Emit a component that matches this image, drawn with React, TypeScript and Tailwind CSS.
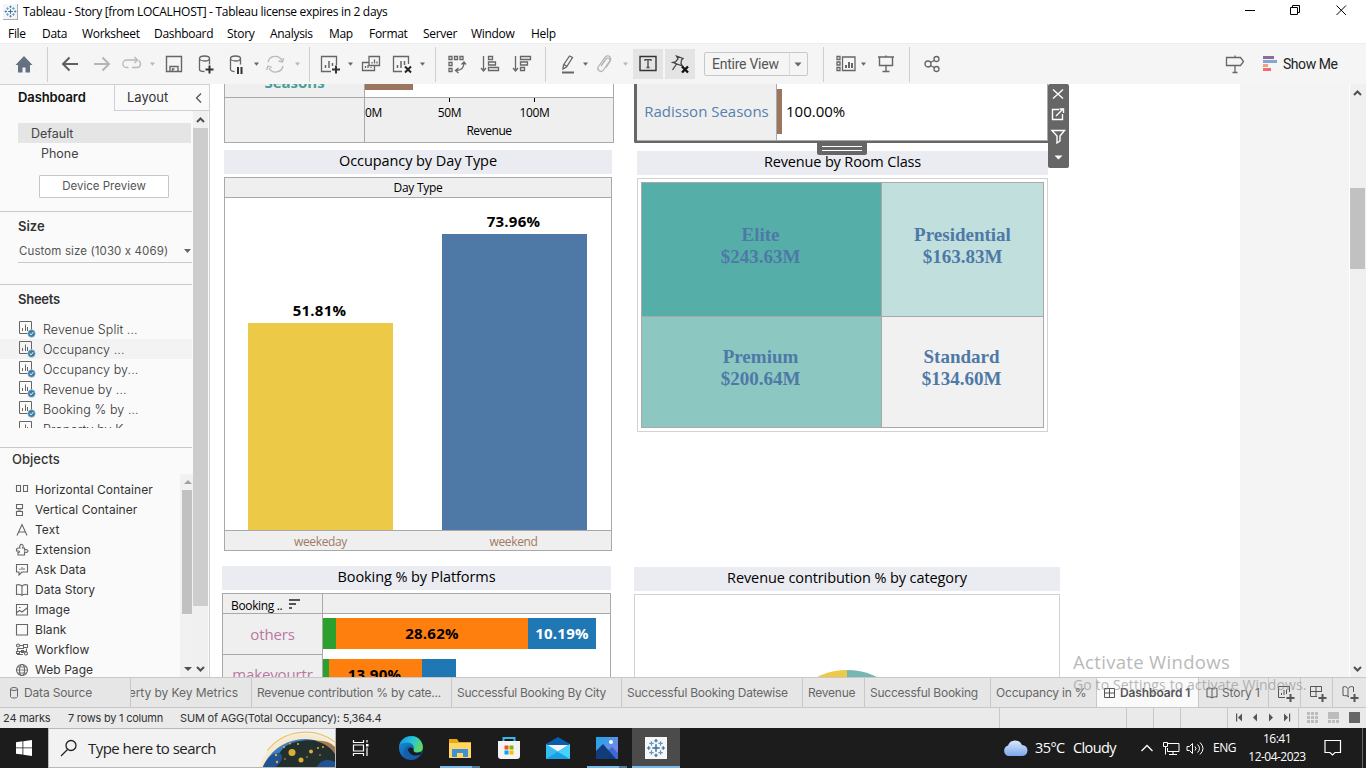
import React from "react";

const Svg = ({ w = 22, h = 22, children, className = "" }: { w?: number; h?: number; children: React.ReactNode; className?: string }) => (
  <svg width={w} height={h} viewBox={`0 0 ${w} ${h}`} fill="none" stroke="#666" strokeWidth="1.3" className={`shrink-0 ${className}`}>
    {children}
  </svg>
);

const Caret = ({ className = "", light = false }: { className?: string; light?: boolean }) => (
  <svg width="8" height="22" viewBox="0 0 8 22" className={`shrink-0 ${className}`}>
    <path d="M2 9.500h5L4.500 12.800z" fill={light ? "#b8b8b8" : "#666"} />
  </svg>
);

const Sep = ({ className = "" }: { className?: string }) => <div className={`h-[35px] w-px shrink-0 bg-[#cfcfcf] ${className}`} />;

const TableauMark = ({ size, className = "" }: { size: number; className?: string }) => (
  <svg width={size} height={size} viewBox="0 0 22 22" className={`shrink-0 ${className}`}>
    <g stroke="#2f6f9f" strokeWidth="1.3">
      <path d="M11 7v8M7 11h8" strokeWidth="1.6" />
      <path d="M11 1v4M9 3h4M11 17v4M9 19h4M3 9v4M1 11h4M19 9v4M17 11h4" />
      <path d="M6 3.500v5M3.500 6h5M16 3.500v5M13.500 6h5M6 13.500v5M3.500 16h5M16 13.500v5M13.500 16h5" stroke="#6a97b8" />
    </g>
  </svg>
);

const Plus = () => <path d="M17 12.500v8M13 16.500h8" stroke="#333" strokeWidth="2" />;

const menu: [string, string][] = [
  ["File", "w-[34px]"], ["Data", "w-[40px]"], ["Worksheet", "w-[72px]"], ["Dashboard", "w-[73px]"], ["Story", "w-[43px]"],
  ["Analysis", "w-[59px]"], ["Map", "w-[40px]"], ["Format", "w-[54px]"], ["Server", "w-[48px]"], ["Window", "w-[60px]"], ["Help", "w-[40px]"],
];

const TopBars = () => (
  <header className="shrink-0 bg-white text-[12px] text-black">
    <div className="flex h-[24px] items-center pl-[3px]">
      <div className="flex h-[16px] w-[15px] items-center justify-center border-r border-b border-[#aaa] bg-[#f3f6f8]">
        <TableauMark size={13} />
      </div>
      <span className="ml-[5px] whitespace-nowrap tracking-[-0.31px]">Tableau - Story [from LOCALHOST] - Tableau license expires in 2 days</span>
      <div className="ml-auto flex h-full items-start pt-[4px] pr-[19px]">
        <svg width="102" height="12" viewBox="0 0 102 12" fill="none" stroke="#000">
          <path d="M0 6.500h10M45.500 3.500h7v7h-7zM47.500 3.500v-2h7v7h-2M91.500 1.500l9.500 9.500M101 1.500l-9.500 9.500" />
        </svg>
      </div>
    </div>
    <nav className="flex h-[19px] items-center pl-[8px]">
      {menu.map(([m, w]) => (
        <span key={m} className={`${w} shrink-0 whitespace-nowrap tracking-[-0.3px]`}>{m}</span>
      ))}
    </nav>
  </header>
);

const Toolbar = () => (
  <div className="flex h-[41px] shrink-0 items-center border-t border-[#ececec] bg-[#f5f5f5]">
    <Svg className="ml-[13px]"><path d="M11 3 2.500 12H5v7.500h4.500v-5h3v5H17V12h2.500z" fill="#657181" stroke="none" /></Svg>
    <Sep className="ml-[12px]" />
    <Svg className="ml-[11px]"><path d="M19 11H4M10.500 4.500 4 11l6.500 6.500" strokeWidth="2" stroke="#5f5f5f" /></Svg>
    <Svg className="ml-[10px]"><path d="M3 11h15M11.500 4.500 18 11l-6.500 6.500" strokeWidth="2" stroke="#b5b5b5" /></Svg>
    <Svg className="ml-[8px]"><path d="M7.500 14.500H5.500a3.500 3.500 0 0 1 0-7.500H15.500M13.500 4l3 3-3 3M17.500 7.500c3.500 2 2 7-1.500 7H11" stroke="#b8b8b8" /></Svg>
    <Caret className="ml-[5px]" light />
    <Svg className="ml-[7px]"><path d="M3.500 3.500h15v15h-15zM7 18.500v-5h8v5M9.500 18.500v-2.500h2" strokeWidth="1.400" /></Svg>
    <Svg className="ml-[10px]"><ellipse cx="9.500" cy="5.500" rx="5" ry="2.500" /><path d="M4.500 5.500v11c0 1 2 2 5 2M14.500 5.500v6" /><path d="M14.500 12.500v8M10.500 16.500h8" stroke="#333" strokeWidth="2" /></Svg>
    <Svg className="ml-[9px]"><ellipse cx="9.500" cy="5.500" rx="5" ry="2.500" /><path d="M4.500 5.500v11c0 1 2 2 4 2M14.500 5.500v6" /><path d="M12 14v7M15.500 14v7" strokeWidth="2" stroke="#333" /></Svg>
    <Caret className="ml-[4px]" />
    <Svg className="ml-[4px]"><path d="M4 9a7.500 7.500 0 0 1 14-1.500M19 13a7.500 7.500 0 0 1-14 2M19.500 5l-1 4-4-1M2.500 17l1.500-4 4 1.500" stroke="#b8b8b8" /></Svg>
    <Caret className="ml-[7px]" light />
    <Sep className="ml-[8px]" />
    <Svg className="ml-[9px]"><path d="M12 18.500H2.500v-15h15V12" /><path d="M6.500 15v-3M10 15V8M13.500 13v-3" strokeWidth="1.500" /><Plus /></Svg>
    <Caret className="ml-[5px]" />
    <Svg className="ml-[6px]"><path d="M9 7.500V3.500h10.500v9h-10.500v-5M14.500 12.500v5h-12v-8H9" /><path d="M12 10.500V9M14.500 10.500v-4M17 10.500v-2M5.500 15v-2M8 15v-3M11 15v-1" /></Svg>
    <Svg className="ml-[9px]"><path d="M11 18.500H2.500v-15h15V11" /><path d="M6.500 15v-3M10 15V8M13.500 12v-4" strokeWidth="1.500" /><path d="m14 13.500 6 6M20 13.500l-6 6" stroke="#222" strokeWidth="2" /></Svg>
    <Caret className="ml-[5px]" />
    <Sep className="ml-[9px]" />
    <Svg className="ml-[10px]"><path d="M3 3.500h3v3H3zM8.500 3.500h3v3h-3zM14 3.500h3v3h-3zM3 9.500h3v3H3zM3 15.500h3v3H3zM10 17.500c5 0 8-3 8-8M12.500 15 9.500 17.500l3 2.500M15.500 11.500l2.500-2.500 2 2.500" /></Svg>
    <Svg className="ml-[11px]"><path d="M4.500 3v15M2 15l2.500 3 2.500-3M9.500 3.500h4v3h-4zM9.500 9h7v3h-7zM9.500 14.500h10v3h-10z" /></Svg>
    <Svg className="ml-[10px]"><path d="M4.500 3v15M2 15l2.500 3 2.500-3M9.500 3.500h10v3h-10zM9.500 9h7v3h-7zM9.500 14.500h4v3h-4z" /></Svg>
    <Sep className="ml-[12px]" />
    <Svg className="ml-[11px]"><path d="M12.500 3 15.500 4.500 9.500 14 6 16l.500-4zM7 11.500l3 2" /><path d="M5 19.500h12" strokeWidth="2" /></Svg>
    <Caret className="ml-[2px]" />
    <Svg className="ml-[5px]"><path d="m7 13 5-7a2 2 0 0 1 3.500 2.500l-6 8.500a3 3 0 0 1-5-3.500L11 4.500a3 3 0 0 1 5-.5c1.500 2 .500 3.500 0 4.500l-4 6" stroke="#b5b5b5" /></Svg>
    <Caret className="ml-[5px]" light />
    <div className="ml-[4px] flex h-[30px] w-[30px] shrink-0 items-center justify-center bg-[#e4e4e4]">
      <Svg><path d="M3 3.500h16v14H3z" stroke="#333" strokeWidth="1.400" /><path d="M8 8V6.700h6V8M11 7v7.500M9.500 14.500h3" stroke="#444" /></Svg>
    </div>
    <div className="ml-[2px] flex h-[30px] w-[30px] shrink-0 items-center justify-center bg-[#e4e4e4]">
      <Svg><path d="M7.500 3 14 5.500 12.500 7l-.5 3.500 1.500 2.500L4 9.500 6.500 9 9 6zM7.500 11l-4 6" stroke="#444" /><path d="m13 13.500 6 6M19 13.500l-6 6" stroke="#111" strokeWidth="2.400" /></Svg>
    </div>
    <div className="ml-[9px] flex h-[24px] w-[104px] shrink-0 items-center rounded-[2px] border border-[#c8c8c8]">
      <span className="w-[84px] pl-[7px] font-[Roboto] text-[14px] leading-[22px] tracking-[-0.250px] text-[#555]">Entire View</span>
      <div className="h-full w-px bg-[#dcdcdc]" />
      <Svg w={17} h={22}><path d="M4.500 9.500h7L8 13.500z" fill="#666" stroke="none" /></Svg>
    </div>
    <Sep className="ml-[15px]" />
    <Svg className="ml-[11px]"><path d="M2 3.500h3v3H2zM2 9h3v3H2zM2 14.500h3v3H2zM7.500 4h12.500v13.500H7.500z" /><path d="M11 15v-3M14 15V9M17 15v-5" strokeWidth="2" /></Svg>
    <Caret className="ml-[2px]" />
    <Svg className="ml-[8px]"><path d="M3 4h16M4.500 4v8.500h13V4M11 2.500V4M11 12.500V18M7.500 18.500h7" strokeWidth="1.400" /></Svg>
    <Sep className="ml-[12px]" />
    <Svg className="ml-[11px]"><circle cx="7" cy="11" r="3" /><circle cx="15.500" cy="6" r="2.500" /><circle cx="15.500" cy="16" r="2.500" /><path d="m9.500 9.500 4-2.300M9.500 12.500l4 2.300" /></Svg>
    <Svg className="ml-auto"><path d="M2.500 4.500h14l3 4-3 4h-14zM11 2.500v2M11 12.500v7M8.500 19.500h5" /></Svg>
    <Svg w={15} h={22} className="ml-[17px]"><path d="M0 4.500h11" stroke="#8a6d9c" strokeWidth="3" /><path d="M0 8.500h14" stroke="#85a6cf" strokeWidth="3" /><path d="M0 12.500h5" stroke="#f1a27a" strokeWidth="3" /><path d="M0 16.500h8" stroke="#f96678" strokeWidth="3" /></Svg>
    <span className="mr-[28px] ml-[5px] w-[55px] font-[Roboto] text-[14px] whitespace-nowrap tracking-[-0.450px] text-[#222]">Show Me</span>
  </div>
);

const sheets = ["Revenue Split ...", "Occupancy ...", "Occupancy by...", "Revenue by ...", "Booking % by ...", "Property by K..."];

const SheetIcon = () => (
  <svg width="18" height="18" viewBox="0 0 18 18" fill="none" className="shrink-0">
    <path d="M1.500 1.500h12v12h-12z" stroke="#666" />
    <path d="M4.500 11V8M7.500 11V4.500M9.500 11V7" stroke="#666" />
    <circle cx="13.500" cy="13.500" r="3.900" fill="#3a7ca2" stroke="#fafafa" strokeWidth=".5" />
    <path d="m11.700 13.500 1.400 1.300 2.200-2.600" stroke="#fff" />
  </svg>
);

const objects: [string, React.ReactNode][] = [
  ["Horizontal Container", <path key="i" d="M1.500 2.500h4v6h-4zM8.500 2.500h4v6h-4zM5.500 3.500v4M8.500 3.500v4" />],
  ["Vertical Container", <path key="i" d="M1.500 1.500h6v4h-6zM1.500 8.500h6v4h-6zM2.500 7h4" />],
  ["Text", <path key="i" d="M2 12.500 7 1.500l5 11M4 9h6" />],
  ["Extension", <path key="i" d="M3 5h2c-1-2 .5-4 2-3.500 2 .5 1 2.500.5 3.500h2v2c2-1 3.500 0 3.500 1s-1.500 2-3.500 1v3H3V9.500c2 .5 2-2 0-1.500H1.500V6z" />],
  ["Ask Data", <g key="i"><path d="M1.500 1.500h11v7.500H7l-3 3V9H1.500z" /><path d="M5 7V5.500M7 7V4M9 7V5" strokeWidth="1.500" stroke="#999" /></g>],
  ["Data Story", <path key="i" d="M1.500 2c2-.7 4-.3 5.500 1 1.500-1.300 3.500-1.700 5.500-1v9.500c-2-.5-4-.3-5.500.7-1.500-1-3.500-1.200-5.500-.7zM7 3.500V12" />],
  ["Image", <path key="i" d="M1.500 1.500h11v10.500h-11zM2 9.500l2.500-2L7 9l5-4M4 4.500h1.500" />],
  ["Blank", <path key="i" d="M1.500 1.500h11v10.500h-11z" />],
  ["Workflow", <g key="i"><circle cx="3" cy="2.500" r="1.500" /><circle cx="11" cy="10.500" r="1.500" /><path d="M4.500 2.500h4v3H2.500v3h9V5.500M2 11.500h6M8.500 1.500h4v3h-4zM1.500 8.500h3v2h-3zM6.500 7.500h2v2h-2z" /></g>],
  ["Web Page", <g key="i"><circle cx="7" cy="7" r="5.500" /><ellipse cx="7" cy="7" rx="2.500" ry="5.500" /><path d="M1.500 7h11M2.500 4h9M2.500 10h9" strokeWidth=".8" /></g>],
];

const Chevron = ({ d }: { d: string }) => (
  <svg width="15" height="17" viewBox="0 0 15 17" fill="none" stroke="#505050" strokeWidth="2" className="shrink-0"><path d={d} /></svg>
);

const Sidebar = () => (
  <aside className="flex w-[210px] shrink-0 flex-col border-t border-r border-[#d0d0d0] bg-[#fafafa] font-[Inter] text-[12px] text-[#444]">
    <div className="flex h-[26px] shrink-0">
      <div className="w-[114px] pl-[18px] text-[13px] leading-[25px] font-semibold tracking-[-0.100px] text-[#111]">Dashboard</div>
      <div className="flex flex-1 items-center border-b border-l border-[#d0d0d0] pl-[12px] text-[13px] tracking-[0px] text-[#333]">
        Layout
        <svg width="8" height="12" viewBox="0 0 8 12" fill="none" stroke="#555" strokeWidth="1.300" className="mr-[6px] ml-auto"><path d="M6 1.500 1.500 6 6 10.500" /></svg>
      </div>
    </div>
    <div className="flex min-h-0 flex-1">
      <div className="flex w-[193px] shrink-0 flex-col overflow-hidden">
        <div className="mt-[12px] ml-[18px] h-[20px] w-[173px] shrink-0 bg-[#e5e5e5] pl-[13px] text-[12.500px] leading-[21px]">Default</div>
        <div className="h-[20px] shrink-0 pl-[41px] text-[12.500px] leading-[21px]">Phone</div>
        <div className="mt-[12px] ml-[39px] h-[23px] w-[130px] shrink-0 rounded-[1px] border border-[#c6c6c6] bg-white text-center text-[11.500px] leading-[20px] tracking-[0px] text-[#555]">Device Preview</div>
        <div className="mt-[13px] w-[192px] border-t border-[#c9c9c9] pt-[4px] pb-px pl-[18px] text-[13px] leading-[20px] font-semibold tracking-[0px] text-[#333]">Size</div>
        <div className="mt-[5px] ml-[18px] flex h-[21px] w-[174px] shrink-0 items-start border-b border-[#c9c9c9] pl-px text-[11.500px] leading-[18px] tracking-[0.110px] whitespace-nowrap text-[#555]">
          Custom size (1030 x 4069)
          <svg width="9" height="18" viewBox="0 0 9 18" className="ml-auto"><path d="M1 7h7l-3.500 4z" fill="#666" /></svg>
        </div>
        <div className="mt-[21px] w-[192px] border-t border-[#c9c9c9] pt-[4px] pb-px pl-[18px] text-[13px] leading-[20px] font-semibold tracking-[-0.250px] text-[#333]">Sheets</div>
        <div className="mt-[9px] h-[109px] w-[192px] shrink-0 overflow-hidden">
          {sheets.map((s, i) => (
            <div key={i} className={`flex h-[20px] items-center pl-[18px] ${i === 1 ? "bg-[#f3f3f3]" : ""}`}>
              <SheetIcon />
              <span className="ml-[7px] pt-[2px] text-[12.500px] leading-[18px] font-light tracking-[0.080px] whitespace-nowrap text-[#333]">{s}</span>
            </div>
          ))}
        </div>
        <div className="mt-[19px] w-[192px] border-t border-[#c9c9c9] pt-px pb-px pl-[12px] text-[13px] leading-[20px] font-medium tracking-[0px] text-[#333]">Objects</div>
        <div className="mt-[4px] flex min-h-0 flex-1">
          <div className="w-[180px] shrink-0 overflow-hidden pt-[6px]">
            {objects.map(([name, icon]) => (
              <div key={name} className="flex h-[20px] items-center pl-[15px]">
                <svg width="14" height="14" viewBox="0 0 14 14" fill="none" stroke="#666" strokeWidth="1.100" className="shrink-0">{icon}</svg>
                <span className="ml-[6px] text-[12px] tracking-[0.050px] whitespace-nowrap text-[#333]">{name}</span>
              </div>
            ))}
          </div>
          <div className="flex w-[13px] flex-col items-center bg-[#f1f1f1] pl-px">
            <svg width="10" height="16" viewBox="0 0 10 16" className="shrink-0"><path d="M2 10h8L6 6z" fill="#a3a3a3" /></svg>
            <div className="h-[124px] w-[10px] bg-[#c1c1c1]" />
            <svg width="10" height="16" viewBox="0 0 10 16" className="mt-auto shrink-0"><path d="M2 6h8l-4 4z" fill="#505050" /></svg>
          </div>
        </div>
      </div>
      <div className="flex w-[15px] flex-col bg-[#f0f0f0]">
        <Chevron d="M4 11 7.500 7.500 11 11" />
        <div className="h-[478px] bg-[#cdcdcd]" />
        <div className="mt-auto h-[17px]"><Chevron d="m4 7 3.500 3.500L11 7" /></div>
      </div>
    </div>
  </aside>
);

const SectionTitle = ({ children, className = "" }: { children: React.ReactNode; className?: string }) => (
  <div className={`h-[24px] shrink-0 bg-[#ebecf1] text-center text-[14.500px] leading-[22px] text-black ${className}`}>{children}</div>
);

const AxisTick = ({ label, className = "" }: { label: string; className?: string }) => (
  <span className={`flex w-[49px] shrink-0 flex-col items-center ${className}`}>
    <i className="block h-[4px] w-px shrink-0 bg-black" />
    <span className="shrink-0 pt-[2px] leading-[18px]">{label}</span>
  </span>
);

const LeftColumn = () => (
  <div className="flex h-full w-[410px] shrink-0 flex-col overflow-hidden text-black">
    <div className="ml-[14px] flex h-[59px] w-[390px] shrink-0 border-x border-b border-[#a9a9a9]">
      <div className="flex w-[140px] flex-col border-r border-[#a9a9a9] bg-[#efefef]">
        <div className="flex h-[14px] shrink-0 items-end justify-center overflow-hidden border-b border-[#a9a9a9] text-[15px] font-bold text-[#4a9e98]">
          <span className="mb-[5px] leading-[20px]">Seasons</span>
        </div>
      </div>
      <div className="flex flex-1 flex-col bg-[#efefef]">
        <div className="h-[14px] shrink-0 border-b border-[#a9a9a9] bg-white"><div className="h-[6px] w-[48px] bg-[#9c755f]" /></div>
        <div className="flex h-[24px] shrink-0 text-[12px] tracking-[-0.300px]">
          <span className="w-[60px] pt-[6px] leading-[18px]">0M</span>
          <AxisTick label="50M" />
          <AxisTick label="100M" className="ml-[36px]" />
        </div>
        <div className="-mt-px shrink-0 text-center text-[12px] leading-[20px] tracking-[-0.450px]">Revenue</div>
      </div>
    </div>
    <SectionTitle className="mt-[7px] ml-[14px] w-[388px] tracking-[-0.080px]">Occupancy by Day Type</SectionTitle>
    <div className="mt-[3px] ml-[14px] flex h-[374px] w-[388px] shrink-0 flex-col border border-[#a9a9a9]">
      <div className="h-[20px] border-b border-[#a9a9a9] bg-[#efefef] text-center text-[12px] leading-[20px] tracking-[-0.300px]">Day Type</div>
      <div className="flex flex-1 items-end bg-white pl-[23px] text-[15px] font-bold tracking-[0.250px]">
        <div className="w-[145px] text-center"><div className="h-[23px] pr-[2px] leading-[21px]">51.81%</div><div className="h-[207px] bg-[#edc948]" /></div>
        <div className="ml-[49px] w-[145px] text-center"><div className="h-[23px] pr-[2px] leading-[21px]">73.96%</div><div className="h-[296px] bg-[#4e79a7]" /></div>
      </div>
      <div className="flex h-[20px] border-t border-[#a9a9a9] bg-[#efefef] text-center text-[12px] leading-[22px] tracking-[-0.350px] text-[#a17a64]">
        <span className="w-[191px]">weekeday</span><span className="flex-1">weekend</span>
      </div>
    </div>
    <SectionTitle className="mt-[15px] ml-[12px] w-[389px] tracking-[-0.080px]">Booking % by Platforms</SectionTitle>
    <div className="mt-[3px] ml-[12px] flex h-[120px] w-[389px] shrink-0 border border-[#a9a9a9]">
      <div className="w-[100px] shrink-0 border-r border-[#a9a9a9] bg-[#efefef] text-center text-[#b8789f]">
        <div className="flex h-[20px] items-center border-b border-[#a9a9a9] pl-[8px] text-[12px] tracking-[-0.350px] text-black">
          <span className="w-[53px] pt-[4px] text-left">Booking ..</span>
          <svg width="12" height="12" viewBox="0 0 12 12" stroke="#555" strokeWidth="2" className="ml-[5px]"><path d="M0 2h11M0 6h7M0 10h3" /></svg>
        </div>
        <div className="h-[41px] border-b border-[#a9a9a9] text-[15px] leading-[40px] tracking-[-0.150px]">others</div>
        <div className="text-[15px] leading-[39px] tracking-[-0.150px]">makeyourtr</div>
      </div>
      <div className="flex-1">
        <div className="h-[20px] border-b border-[#a9a9a9] bg-[#efefef]" />
        <div className="mt-[4px] flex h-[31px] text-center text-[15px] leading-[31px] font-bold tracking-[0.250px]">
          <div className="w-[13px] bg-[#2ca02c]" /><div className="w-[192px] bg-[#ff7f0e]">28.62%</div><div className="w-[68px] bg-[#1f77b4] text-white">10.19%</div>
        </div>
        <div className="mt-[10px] flex h-[31px] text-center text-[15px] leading-[31px] font-bold tracking-[0.250px]">
          <div className="w-[6px] bg-[#2ca02c]" /><div className="w-[93px] bg-[#ff7f0e] pr-[2px]">13.90%</div><div className="w-[34px] bg-[#1f77b4]" />
        </div>
      </div>
    </div>
  </div>
);

const rooms: [string, string, string][] = [
  ["Elite", "$243.63M", "bg-[#56aea9] pb-[8px] pr-[2px]"],
  ["Presidential", "$163.83M", "bg-[#c1dfdd] pb-[8px]"],
  ["Premium", "$200.64M", "bg-[#8cc7c1] pb-[8px] pr-[2px]"],
  ["Standard", "$134.60M", "bg-[#f1f1f1] pb-[8px] pr-[2px]"],
];

const RightColumn = () => (
  <div className="relative flex h-full w-[620px] shrink-0 flex-col overflow-hidden text-black">
    <div className="ml-[14px] flex h-[59px] w-[414px] shrink-0 rounded-bl-[2px] border-b-2 border-l-[3px] border-[#666]">
      <div className="w-[140px] shrink-0 border-r border-b border-[#a9a9a9] bg-[#efefef] text-center text-[15px] leading-[54px] tracking-[0px] text-[#5580b0]">Radisson Seasons</div>
      <div className="flex flex-1 border-r border-b border-[#a9a9a9] pt-[5px]">
        <div className="h-[45px] w-[5px] bg-[#9c755f]" />
        <span className="ml-[4px] text-[15px] leading-[45px] tracking-[0px]">100.00%</span>
      </div>
    </div>
    <SectionTitle className="mt-[8px] ml-[17px] w-[411px] tracking-[-0.150px]">Revenue by Room Class</SectionTitle>
    <div className="mt-[3px] ml-[17px] h-[254px] w-[411px] shrink-0 border border-[#d2d2d2] pt-[3px] pl-[3px]">
      <div className="grid h-[246px] w-[403px] grid-cols-[239px_161px] grid-rows-[133px_110px] gap-px border border-[#a9a9a9] bg-[#a9a9a9] font-['Liberation_Serif'] text-[19px] leading-[22px] font-bold text-[#4e79a7]">
        {rooms.map(([n, v, c]) => (
          <div key={n} className={`flex flex-col items-center justify-center ${c}`}><span>{n}</span><span>{v}</span></div>
        ))}
      </div>
    </div>
    <SectionTitle className="mt-[135px] ml-[14px] w-[426px] tracking-[-0.100px]">Revenue contribution % by category</SectionTitle>
    <div className="mt-[3px] ml-[14px] flex h-[120px] w-[426px] shrink-0 justify-center border border-[#d2d2d2]">
      <svg width="136" height="44" viewBox="0 0 136 44" className="mt-[75px]"><path d="M68 0v68H0A68 68 0 0 1 68 0" fill="#edc948" /><path d="M68 0v68h68A68 68 0 0 0 68 0" fill="#76b7b2" /></svg>
    </div>

    <div className="absolute top-[59px] left-[197px] flex h-[12px] w-[50px] flex-col items-center rounded-b-[2px] bg-[#666] pt-[3px]">
      <div className="h-[5px] w-[40px] border-y border-white" />
    </div>
    <div className="absolute top-0 left-[428px] h-[84px] w-[21px] rounded-[2px] bg-[#666]">
      <svg width="21" height="84" viewBox="0 0 21 84" fill="none" stroke="#fff" strokeWidth="1.400">
        <path d="m5 5.500 10 9M15 5.500l-10 9" />
        <path d="M11 25.500H4.500V35.500H14.500V30M8 32l7-7M11.500 25h4v4" />
        <path d="M4 46.500h12.500l-4.500 5.500v5l-3 2v-7z" />
        <path d="M6.500 71.500h8l-4 4z" fill="#fff" stroke="none" />
      </svg>
    </div>
  </div>
);

const PlusSmall = () => <path d="M13.500 9v8M9.500 13h8" stroke="#555" strokeWidth="2" />;

const tabs: [string, string][] = [
  ["Revenue contribution % by cate...", "w-[200px] tracking-[-0.220px]"],
  ["Successful Booking By City", "w-[170px] tracking-[-0.270px]"],
  ["Successful Booking Datewise", "w-[181px] tracking-[-0.250px]"],
  ["Revenue", "w-[62px] tracking-[-0.250px]"],
  ["Successful Booking", "w-[126px] tracking-[-0.240px]"],
  ["Occupancy in %", "w-[106px] tracking-[-0.200px]"],
];

const Tabs = () => (
  <div className="flex h-[31px] shrink-0 border-y border-[#c8c8c8] bg-[#e6e6e6] font-[Inter] text-[12px] leading-[29px] whitespace-nowrap text-[#666]">
    <div className="flex w-[131px] shrink-0 items-center border-r border-[#c8c8c8] pl-[9px]">
      <svg width="11" height="12" viewBox="0 0 11 12" fill="none" stroke="#666"><ellipse cx="5" cy="2" rx="3.500" ry="1.500" /><path d="M1.500 2v7.500c0 2 7 2 7 0V2" /></svg>
      <span className="ml-[4px] tracking-[-0.150px]">Data Source</span>
    </div>
    <div className="flex w-[121px] shrink-0 justify-end overflow-hidden border-r border-[#c8c8c8] pr-[13px] tracking-[-0.050px]">Property by Key Metrics</div>
    {tabs.map(([t, w]) => (
      <div key={t} className={`shrink-0 border-r border-[#c8c8c8] pl-[5px] ${w}`}>{t}</div>
    ))}
    <div className="flex w-[101px] shrink-0 items-center bg-[#fafafa] pl-[6px]">
      <svg width="13" height="12" viewBox="0 0 13 12" fill="none" stroke="#555"><path d="M1.500 1.500h10v9h-10zM1.500 6h10M6.500 1.500v9" /></svg>
      <span className="ml-[4px] font-semibold tracking-[-0.100px] text-[#555]">Dashboard 1</span>
    </div>
    <div className="flex w-[71px] shrink-0 items-center border-x border-[#c8c8c8] pl-[7px]">
      <svg width="13" height="14" viewBox="0 0 13 14" fill="none" stroke="#555"><path d="M1 2.500c2-1 4-.5 5 .5 1-1 3-1.500 5-.5V11c-2-.5-4 0-5 1-1-1-3-1.500-5-1zM6 3v9" /></svg>
      <span className="ml-[3px] tracking-[-0.100px]">Story 1</span>
    </div>
    <div className="flex w-[32px] items-center justify-center border-r border-[#c8c8c8]"><svg width="18" height="17" viewBox="0 0 18 17" fill="none" stroke="#555" className="mt-[2px] ml-[2px]"><path d="M8 12.500H1.500v-11h11V7M4.500 10V8M7 10V5M9.500 9V4.500" /><PlusSmall /></svg></div>
    <div className="flex w-[32px] items-center justify-center border-r border-[#c8c8c8]"><svg width="18" height="17" viewBox="0 0 18 17" fill="none" stroke="#555" className="mt-[2px] ml-[2px]"><path d="M8 11.500H1.500v-10h11V7M1.500 6.500h11M7 1.500v10" /><PlusSmall /></svg></div>
    <div className="flex w-[32px] items-center justify-center"><svg width="18" height="17" viewBox="0 0 18 17" fill="none" stroke="#555" className="mt-[2px] ml-[2px]"><path d="M8 12c-2-2-4-1-6-1.500V2c2-1 4 0 5 1.500C8 2 10 1 12.500 2v5M7 3.500V12" /><PlusSmall /></svg></div>
  </div>
);

const StatusBar = () => (
  <div className="flex h-[20px] shrink-0 items-stretch bg-[#eaeaea] font-[Inter] text-[11px] leading-[20px] whitespace-nowrap text-[#333]">
    <span className="w-[65px] pl-[3px] tracking-[-0.150px]">24 marks</span>
    <span className="w-[113px] pl-[3px] tracking-[-0.230px]">7 rows by 1 column</span>
    <span className="pl-[2px] tracking-[-0.170px]">SUM of AGG(Total Occupancy): 5,364.4</span>
    <div className="ml-auto flex shrink-0">
      <div className="w-[127px] border-l border-[#c8c8c8]" /><div className="w-[27px] border-l border-[#c8c8c8]" /><div className="w-[27px] border-l border-[#c8c8c8]" /><div className="w-[47px] border-l border-[#c8c8c8]" />
      <div className="w-[71px] border-l border-[#c8c8c8]">
        <svg width="70" height="20" viewBox="0 0 70 20" fill="#555"><path d="M8 5.500h1.200v8H8zM14 5.500v8l-4-4zM29 5.500v8l-4-4zM41 5.500v8l4-4zM56 5.500v8l4-4zM61 5.500h1.200v8H61z" /></svg>
      </div>
      <div className="w-[68px] border-l border-[#c8c8c8]">
        <svg width="67" height="20" viewBox="0 0 67 20" fill="#bcbcbc">
          <path d="M8 4h3v3H8zM12 4h3v3h-3zM16 4h3v3h-3zM8 8h3v3H8zM12 8h3v3h-3zM16 8h3v3h-3zM8 12h3v3H8zM12 12h3v3h-3zM16 12h3v3h-3zM29 4h11v7H29zM29 12h3v3h-3zM33 12h3v3h-3zM37 12h3v3h-3z" />
          <path d="M50 4h11v11H50z" fill="#666" />
        </svg>
      </div>
    </div>
  </div>
);

const Taskbar = () => (
  <footer className="flex h-[40px] shrink-0 bg-[#1c1c1c] text-white">
    <div className="flex w-[48px] items-center justify-center"><svg width="16" height="16" viewBox="0 0 16 16" fill="#fff"><path d="M0 2.200 6.500 1.300v6.200H0zM7.300 1.200 16 0v7.500H7.300zM0 8.300h6.500v6.300L0 13.700zM7.300 8.300H16V16l-8.700-1.200z" /></svg></div>
    <div className="flex w-[288px] items-center border border-[#b8b8b8] bg-[#f2f2f2] pl-[11px] text-[#222]">
      <svg width="18" height="18" viewBox="0 0 18 18" fill="none" stroke="#222" strokeWidth="1.300"><circle cx="11" cy="6.500" r="5" /><path d="M7.500 10.500 1 17" /></svg>
      <span className="ml-[10px] w-[128px] text-[15px] tracking-[-0.530px] whitespace-nowrap">Type here to search</span>
      <svg width="76" height="38" viewBox="0 0 76 38" className="ml-auto shrink-0">
        <circle cx="46" cy="53" r="48" fill="#f6e4b5" opacity=".6" /><path d="M8 22A49 49 0 0 1 76 13" fill="none" stroke="#edc468" strokeWidth="1.200" />
        <circle cx="46" cy="56" r="46" fill="#3f7dc5" />
        <path d="M27 17C39 10 62 8 76 20v18H14c3-6 4-14 13-21" fill="#222f2c" />
        <path d="M4 38C8 29 15 21 22 25c3 5-1 9-5 13zM58 38c3-7 11-9 18-5v5z" fill="#205391" />
        <g fill="#dcae38"><circle cx="33" cy="23.500" r="3.500" /><circle cx="52" cy="22.500" r="2" /><circle cx="42" cy="31" r="2.500" /><circle cx="39" cy="15" r="1" /><circle cx="31" cy="14.500" r="1" /><circle cx="17" cy="26" r="1.200" /><circle cx="25" cy="18" r="1" /><circle cx="59" cy="19" r="1" /><circle cx="64" cy="18" r="1" /><circle cx="18" cy="33" r="1.200" /><circle cx="48" cy="28" r=".8" /><circle cx="61" cy="26" r=".8" /><circle cx="26" cy="30" r=".8" /></g>
        <path d="M57 12c10 3 16 8 19 13v-7c-5-5-11-7-19-6" fill="#a37a50" />
      </svg>
    </div>
    <div className="flex w-[49px] items-center justify-center"><svg width="18" height="16" viewBox="0 0 18 16" fill="none" stroke="#fff" strokeWidth="1.200"><path d="M1.500 0v2.500h10V0M1.500 5h10v6h-10zM1.500 16v-2.500h10V16M15 0v2.500M15 7.500V16" /><path d="M14 4h2.500v2.500H14z" fill="#fff" stroke="none" /></svg></div>
    <div className="flex w-[51px] items-center justify-center">
      <svg width="26" height="26" viewBox="0 0 26 26">
        <defs><linearGradient id="edgeTop" x1="0" y1=".3" x2="1" y2=".6"><stop stopColor="#1696dc" /><stop offset=".5" stopColor="#26c5d8" /><stop offset="1" stopColor="#65dc55" /></linearGradient><linearGradient id="edgeBase" x1="0" y1="0" x2=".8" y2="1"><stop stopColor="#1796df" /><stop offset="1" stopColor="#0d4c9b" /></linearGradient></defs>
        <circle cx="13" cy="13" r="12" fill="url(#edgeBase)" />
        <path d="M1 11C3 3 10 0 17 1.500c6 2 9 9 7.500 13-2 4-8 3.500-9 1.500 1.500-5-1-8-6-8.500C5 7.500 2 9 1 11" fill="url(#edgeTop)" />
        <path d="M10 14c-1 5 4 9 12.500 5.500-3 4.500-8 6-12 4.500-6-2-6-9-2-12 3-2 6-1 7 1-3-1.500-5-.5-5.500 1" fill="#155eac" />
        <path d="M15.500 16.300c2 2 5 2 8 .2l-1 3c-7 3-12-1-12.500-5 .5-2 3-3 5.500-.5z" fill="#1c1c1c" />
      </svg>
    </div>
    <div className="flex w-[47px] flex-col items-center justify-end">
      <svg width="26" height="24" viewBox="0 0 26 24"><path d="M2 2h8l2 3h12v16H2z" fill="#e9a714" /><path d="M2 6h22v15H2z" fill="#ffd766" /><path d="M5 12h16v8h-5v-4h-6v4H5z" fill="#3e91d4" /></svg>
      <div className="mt-[5px] flex h-[2px] w-[40px] bg-[#76b9ed]"><i className="ml-auto w-[8px] bg-[#53799a]" /></div>
    </div>
    <div className="flex w-[51px] items-center justify-center"><svg width="24" height="26" viewBox="0 0 24 26"><path d="M6.500 6V3h11v3" fill="none" stroke="#33b9ea" strokeWidth="2" /><path d="M1 6h22v15q0 3-3 3H4q-3 0-3-3z" fill="#f3f3f3" /><path d="M7.500 10.500h4v4h-4z" fill="#f25022" /><path d="M12.500 10.500h4v4h-4z" fill="#7fba00" /><path d="M7.500 15.500h4v4h-4z" fill="#00a4ef" /><path d="M12.500 15.500h4v4h-4z" fill="#ffb900" /></svg></div>
    <div className="flex w-[48px] items-center justify-center"><svg width="24" height="24" viewBox="0 0 24 24"><path d="M0 8 12 1l12 7v3H0z" fill="#0b5cad" /><path d="M1 9h22L12 17z" fill="#f5f5f5" /><path d="M0 8v15h24z" fill="#35bcf1" /><path d="M24 8v15H0z" fill="#1aa0e6" /><path d="m12 16 12 7V8z" fill="#48d2f8" /></svg></div>
    <div className="flex w-[50px] flex-col items-center justify-end">
      <svg width="22" height="22" viewBox="0 0 22 22"><defs><linearGradient id="sky" x1="0" y1="0" x2="1" y2="1"><stop stopColor="#19a9ea" /><stop offset="1" stopColor="#9b7be5" /></linearGradient></defs><path d="M0 0h22v22H0z" fill="url(#sky)" /><circle cx="15" cy="5" r="2" fill="#fff" /><path d="m10 15 6-5 6 6v6H10z" fill="#3f68d2" /><path d="M0 14 7 7l13 15H0z" fill="#123b79" /></svg>
      <div className="mt-[7px] flex h-[2px] w-[40px] bg-[#76b9ed]"><i className="ml-auto w-[8px] bg-[#53799a]" /></div>
    </div>
    <div className="flex w-[48px] flex-col items-center justify-end bg-[#4b4b4b]">
      <div className="flex h-[22px] w-[22px] items-center justify-center bg-[#f4f6f8]"><TableauMark size={20} /></div>
      <div className="mt-[7px] h-[2px] w-[48px] bg-[#76b9ed]" />
    </div>
    <div className="ml-auto flex items-center">
      <svg width="26" height="20" viewBox="0 0 26 20"><defs><linearGradient id="cloud" x1="0" y1="0" x2="0" y2="1"><stop stopColor="#dce8fb" /><stop offset="1" stopColor="#7aa8ee" /></linearGradient></defs><path d="M6 18a5.500 5.500 0 0 1 0-10.500A7.500 7.500 0 0 1 20 7a5.500 5.500 0 0 1 0 11z" fill="url(#cloud)" /></svg>
      <span className="ml-[7px] w-[38px] text-[14.500px] tracking-[-0.600px]">35°C</span>
      <span className="w-[68px] text-[14.500px] tracking-[-0.600px]">Cloudy</span>
      <svg width="12" height="8" viewBox="0 0 12 8" fill="none" stroke="#fff" strokeWidth="1.300"><path d="m.5 7 5.500-5.500L11.500 7" /></svg>
      <svg width="17" height="15" viewBox="0 0 17 15" fill="none" stroke="#fff" className="ml-[10px]"><path d="M5 2.500h11v8H4.500V7M.5 1.500h4v4h-4zM2.500 5.500v8M10 10.500v3M6 13.500h8" /></svg>
      <svg width="18" height="15" viewBox="0 0 18 15" fill="none" stroke="#fff" className="ml-[6px]"><path d="M1 5.500h2.500l3-3v10l-3-3H1zM9 5.500q2 2 0 4M11.500 3.500q4 4 0 8M14 1.500q6 6 0 12" /></svg>
      <span className="ml-[9px] w-[34px] text-[12px] tracking-[-0.500px]">ENG</span>
      <div className="w-[60px] text-center text-[12px] leading-[18px] tracking-[-0.530px]"><div>16:41</div><div className="whitespace-nowrap">12-04-2023</div></div>
      <svg width="18" height="18" viewBox="0 0 18 18" fill="none" stroke="#fff" strokeWidth="1.200" className="ml-[17px]"><path d="M1 1.500h15.500v12H11L8.500 16 6 13.500H1z" /></svg>
      <div className="ml-[20px] h-[40px] w-px bg-[#666]" />
      <div className="w-[3px]" />
    </div>
  </footer>
);

export default function App() {
  return (
    <div className="relative flex h-[768px] w-[1366px] flex-col overflow-hidden bg-white font-['Open_Sans','Noto_Sans',sans-serif]">
      <TopBars />
      <Toolbar />
      <main className="flex h-[593px] shrink-0">
        <Sidebar />
        <LeftColumn />
        <RightColumn />
        <div className="flex-1 border-r border-white bg-[#f4f4f4]" />
        <div className="flex w-[16px] flex-col bg-[#f0f0f0]">
          <Chevron d="M4 11 7.500 7.500 11 11" />
          <div className="mt-[87px] h-[81px] w-[15px] bg-[#c1c1c1]" />
          <div className="mt-auto h-[17px]"><Chevron d="m4 7 3.500 3.500L11 7" /></div>
        </div>
      </main>
      <Tabs />
      <StatusBar />
      <Taskbar />
      <div className="pointer-events-none absolute top-[650px] left-[1073px] whitespace-nowrap text-[#8c8c8c] opacity-60">
        <div className="text-[18.500px] leading-[24px] tracking-[0.330px]">Activate Windows</div>
        <div className="text-[14px] leading-[22px] tracking-[0.120px]">Go to Settings to activate Windows.</div>
      </div>
    </div>
  );
}
